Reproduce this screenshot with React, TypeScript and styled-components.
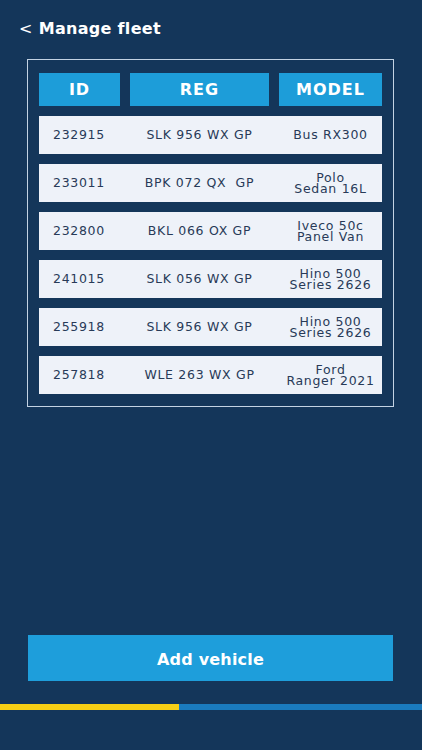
import React from "react";
import styled, { createGlobalStyle } from "styled-components";

const Global = createGlobalStyle`
  html, body { margin: 0; padding: 0; background: #14365a; }
  body { font-family: "DejaVu Sans", Verdana, sans-serif; }
  #root { min-height: 750px; }
`;

const Screen = styled.div`
  height: 750px;
  display: flex;
  flex-direction: column;
  background: #14365a;
  overflow: hidden;
`;

const TitleBar = styled.div`
  height: 56px;
  display: flex;
  align-items: center;
  padding: 0 0 0 19px;
  color: #ffffff;
  font-weight: bold;
  font-size: 16px;
  letter-spacing: 0.3px;
  box-sizing: border-box;
`;

const Back = styled.span`
  font-weight: normal;
  margin-right: 6px;
`;

const Frame = styled.div`
  margin: 3px 0 0 27px;
  width: 367px;
  box-sizing: border-box;
  border: 1px solid #c3d2e3;
  padding: 13px 11px 12px 11px;
  display: flex;
  flex-direction: column;
  gap: 10px;
`;

const Grid = styled.div`
  display: grid;
  grid-template-columns: 81px 139px 103px;
  column-gap: 10px;
`;

const HeadCell = styled.div`
  height: 33px;
  background: #1d9dd9;
  color: #ffffff;
  font-weight: bold;
  font-size: 16px;
  letter-spacing: 1px;
  display: flex;
  align-items: center;
  justify-content: center;
`;

const Row = styled.div`
  height: 38px;
  background: #eef2f9;
  display: grid;
  grid-template-columns: 81px 139px 103px;
  column-gap: 10px;
  align-items: center;
  color: #283a58;
  font-size: 12.5px;
  letter-spacing: 0.7px;
`;

const Cell = styled.div<{ $left?: boolean; $nowrap?: boolean }>`
  text-align: ${(p) => (p.$left ? "left" : "center")};
  padding-left: ${(p) => (p.$left ? "14px" : "0")};
  line-height: 11.5px;
  white-space: ${(p) => (p.$nowrap ? "pre" : "pre-line")};
`;

const Footer = styled.div`
  margin-top: auto;
  display: flex;
  flex-direction: column;
  padding-bottom: 40px;
`;

const AddButton = styled.button`
  margin-left: 28px;
  width: 365px;
  height: 46px;
  border: none;
  background: #1e9edb;
  color: #ffffff;
  font-family: "DejaVu Sans", Verdana, sans-serif;
  font-weight: bold;
  font-size: 16px;
  letter-spacing: 0.2px;
  padding: 3px 0 0 0;
`;

const Progress = styled.div`
  margin-top: 23px;
  height: 6px;
  background: #1a7bbe;
  display: flex;
`;

const ProgressFill = styled.div`
  height: 100%;
  background: #f6cf16;
`;

const rows = [
  ["232915", "SLK 956 WX GP", "Bus RX300"],
  ["233011", "BPK 072 QX  GP", "Polo\nSedan 16L"],
  ["232800", "BKL 066 OX GP", "Iveco 50c\nPanel Van"],
  ["241015", "SLK 056 WX GP", "Hino 500\nSeries 2626"],
  ["255918", "SLK 956 WX GP", "Hino 500\nSeries 2626"],
  ["257818", "WLE 263 WX GP", "Ford\nRanger 2021"],
];

export default function App() {
  return (
    <>
      <Global />
      <Screen>
        <TitleBar>
          <Back>&lt;</Back>Manage fleet
        </TitleBar>
        <Frame>
          <Grid>
            <HeadCell>ID</HeadCell>
            <HeadCell>REG</HeadCell>
            <HeadCell>MODEL</HeadCell>
          </Grid>
          {rows.map((r, i) => (
            <Row key={i}>
              <Cell $left>{r[0]}</Cell>
              <Cell $nowrap>{r[1]}</Cell>
              <Cell>{r[2]}</Cell>
            </Row>
          ))}
        </Frame>
        <Footer>
          <AddButton>Add vehicle</AddButton>
          <Progress>
            <ProgressFill style={{ width: `${(179 / 422) * 100}%` }} />
          </Progress>
        </Footer>
      </Screen>
    </>
  );
}
